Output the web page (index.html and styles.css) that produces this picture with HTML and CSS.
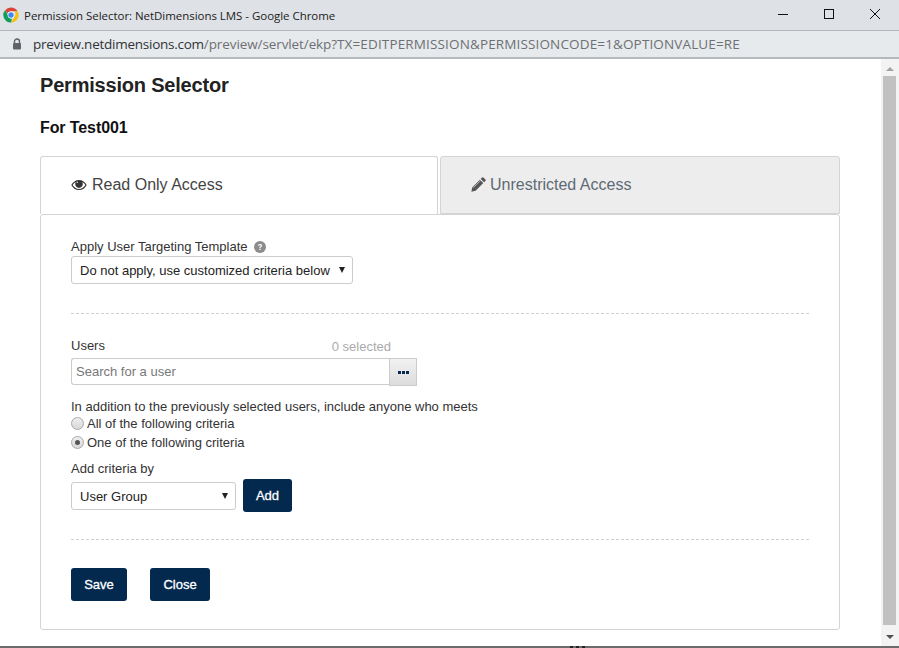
FILE: index.html
```html
<!DOCTYPE html>
<html lang="en">
<head>
<meta charset="utf-8">
<title>Permission Selector: NetDimensions LMS</title>
<link rel="stylesheet" href="styles.css">
</head>
<body>
<div class="window">
  <header class="titlebar">
    <svg class="chrome-logo" width="16" height="16" viewBox="0 0 16 16">
      <path d="M8 0.500a7.500 7.500 0 0 1 6.500 3.750H8a3.750 3.750 0 0 0-3.400 2.200L2.100 3.200A7.500 7.500 0 0 1 8 0.500z" fill="#db4437"/>
      <path d="M14.500 4.250A7.500 7.500 0 0 1 8 15.500l3.250-5.600a3.750 3.750 0 0 0 0-5.650z" fill="#f4c20d"/>
      <path d="M8 15.500A7.500 7.500 0 0 1 2.100 3.200l3.250 5.600A3.750 3.750 0 0 0 9 11.600z" fill="#0f9d58"/>
      <circle cx="8" cy="8" r="3.400" fill="#fff"/>
      <circle cx="8" cy="8" r="2.700" fill="#4285f4"/>
    </svg>
    <span class="title-text">Permission Selector: NetDimensions LMS - Google Chrome</span>
    <div class="win-controls">
      <svg class="win-btn" width="12" height="12" viewBox="0 0 12 12"><path d="M1 6.500h10" stroke="#111" fill="none"/></svg>
      <svg class="win-btn" width="12" height="12" viewBox="0 0 12 12"><rect x="1.500" y="1.500" width="9" height="9" stroke="#111" fill="none"/></svg>
      <svg class="win-btn" width="12" height="12" viewBox="0 0 12 12"><path d="M1 1l10 10M11 1L1 11" stroke="#111" fill="none"/></svg>
    </div>
  </header>
  <div class="urlbar">
    <svg class="lock" width="10" height="12" viewBox="0 0 10 12"><path d="M2.500 5V3.500a2.500 2.500 0 0 1 5 0V5" fill="none" stroke="#5f6368" stroke-width="1.400"/><rect x="1" y="5" width="8" height="6.500" rx="1" fill="#5f6368"/></svg>
    <span class="url"><span class="host">preview.netdimensions.com</span><span class="path">/preview/servlet/ekp?</span><span class="query">TX=EDITPERMISSION&amp;PERMISSIONCODE=1&amp;OPTIONVALUE=RE</span></span>
  </div>
  <div class="viewport">
    <main class="page">
      <h1 class="page-title">Permission Selector</h1>
      <h2 class="page-sub">For Test001</h2>
      <div class="tabs">
        <div class="tab tab-active">
          <svg class="tab-icon" width="16" height="12" viewBox="0 0 16 12"><path fill-rule="evenodd" fill="#333" d="M8 1C4.600 1 1.800 3 .3 6c1.500 3 4.300 5 7.700 5s6.200-2 7.700-5C14.200 3 11.400 1 8 1zM8 9.900C5.300 9.900 3 8.400 1.600 6 2.400 4.700 3.500 3.700 4.800 3.100 4.400 3.600 4.200 4.300 4.200 5.100 4.200 7.200 5.900 8.900 8 8.900s3.800-1.700 3.800-3.800c0-.8-.2-1.500-.6-2 1.300.6 2.400 1.600 3.200 2.900C13 8.400 10.700 9.900 8 9.900zM6.900 3.200c0 .4-.3.700-.7.700s-.7-.3-.7-.7.3-.7.7-.7.7.3.7.7z"/></svg>
          <span>Read Only Access</span>
        </div>
        <div class="tab tab-inactive">
          <svg class="tab-icon" width="15" height="15" viewBox="0 0 15 15"><path fill="#555" d="M11 .6a1 1 0 0 1 1.400 0l2 2a1 1 0 0 1 0 1.400l-1.300 1.300-3.400-3.400zM8.900 2.700l3.400 3.400-7.700 7.700-4.200 1 .8-4.400z"/><path d="M2.400 10.700l7.300-7.300" stroke="#ededed" stroke-width=".6" fill="none"/></svg>
          <span>Unrestricted Access</span>
        </div>
      </div>
      <section class="panel">
        <div class="field-label">Apply User Targeting Template
          <svg class="help" width="12" height="12" viewBox="0 0 12 12"><circle cx="6" cy="6" r="6" fill="#8c8c8c"/><path d="M3.900 4.700c0-1.100.9-1.800 2.100-1.800s2.200.7 2.200 1.700c0 1.400-1.600 1.300-1.600 2.400H5.300c0-1.600 1.500-1.500 1.500-2.300 0-.4-.3-.6-.8-.6s-.8.300-.8.700z" fill="#fff"/><rect x="5.300" y="7.700" width="1.300" height="1.300" fill="#fff"/></svg>
        </div>
        <div class="select-wrap select-template">
          <select class="select"><option>Do not apply, use customized criteria below</option></select>
          <svg class="caret" width="6" height="6" viewBox="0 0 6 6"><path d="M0 0h6L3 6z" fill="#222"/></svg>
        </div>
        <hr class="divider divider-first">
        <div class="users-head">
          <span class="users-label">Users</span>
          <span class="count">0 selected</span>
        </div>
        <div class="search-row">
          <input class="search" type="text" placeholder="Search for a user">
          <button class="more" type="button" aria-label="Browse users">
            <svg width="11" height="3" viewBox="0 0 11 3"><rect x="0" y="0" width="3" height="3" fill="#03294f"/><rect x="4" y="0" width="3" height="3" fill="#03294f"/><rect x="8" y="0" width="3" height="3" fill="#03294f"/></svg>
          </button>
        </div>
        <div class="addition">In addition to the previously selected users, include anyone who meets</div>
        <label class="radio-row"><input class="radio" type="radio" name="crit">All of the following criteria</label>
        <label class="radio-row"><input class="radio" type="radio" name="crit" checked>One of the following criteria</label>
        <div class="add-label">Add criteria by</div>
        <div class="add-row">
          <div class="select-wrap select-criteria">
            <select class="select"><option>User Group</option></select>
            <svg class="caret" width="6" height="6" viewBox="0 0 6 6"><path d="M0 0h6L3 6z" fill="#222"/></svg>
          </div>
          <button class="btn btn-add" type="button">Add</button>
        </div>
        <hr class="divider divider-second">
        <div class="actions">
          <button class="btn btn-save" type="button">Save</button>
          <button class="btn btn-close" type="button">Close</button>
        </div>
      </section>
    </main>
    <div class="scrollbar">
      <svg class="scroll-arrow" width="8" height="4" viewBox="0 0 8 4"><path d="M4 0l4 4H0z" fill="#a3a3a3"/></svg>
      <div class="thumb"></div>
      <svg class="scroll-arrow" width="8" height="4" viewBox="0 0 8 4"><path d="M0 0h8L4 4z" fill="#505050"/></svg>
    </div>
  </div>
  <div class="bottom-edge"><div class="edge-mark"></div></div>
</div>
</body>
</html>
```
FILE: styles.css
```css
* { box-sizing: border-box; }
html, body { margin: 0; padding: 0; height: 100%; overflow: hidden; background: #fff; }
body { font-family: "Liberation Sans", Arial, sans-serif; color: #333; font-size: 13px; }
.window { width: 899px; height: 648px; display: flex; flex-direction: column; }

.titlebar { height: 31px; flex: none; background: #dee1e6; border-bottom: 1px solid #b4b6ba; display: flex; align-items: center; padding-left: 3px; }
.chrome-logo { flex: none; }
.title-text { margin-left: 5px; font-family: "Open Sans", sans-serif; font-size: 11.500px; color: #222; letter-spacing: -0.04px; }
.win-controls { margin-left: auto; display: flex; gap: 34px; padding: 0 18px 2px 0; }
.win-btn { display: block; }

.urlbar { height: 28px; flex: none; background: #e7eaec; border-bottom: 2px solid #b6b8ba; display: flex; align-items: center; padding-left: 12px; }
.lock { flex: none; }
.url { margin-left: 11px; font-family: "Open Sans", sans-serif; font-size: 13.500px; color: #6d7074; letter-spacing: -0.25px; white-space: nowrap; }
.host { color: #303338; }
.path { letter-spacing: -0.1px; }
.query { letter-spacing: 0.14px; }

.viewport { flex: 1; min-height: 0; display: flex; }
.page { flex: 1; min-width: 0; padding: 15px 41px 0 40px; }
.page-title { margin: 0; font-size: 20px; line-height: 23px; font-weight: 700; color: #222; letter-spacing: -0.2px; }
.page-sub { margin: 22px 0 0; font-size: 16px; line-height: 18px; font-weight: 700; color: #111; letter-spacing: -0.1px; }

.tabs { margin-top: 19px; display: flex; gap: 2px; height: 58px; }
.tab { display: flex; align-items: center; gap: 5px; padding: 0 0 2px 30px; font-size: 16px; border: 1px solid #d4d4d4; border-radius: 3px 3px 0 0; }
.tab-active { width: 398px; background: #fff; color: #444; border-bottom: 0; }
.tab-inactive { width: 400px; padding-bottom: 1px; gap: 4px; background: #ededed; color: #5e6a74; }
.tab-icon { flex: none; }

.panel { height: 416px; border: 1px solid #d4d4d4; border-radius: 3px; padding: 25px 30px 0; background: #fff; }
.field-label { line-height: 14px; display: flex; align-items: center; gap: 6px; }
.help { flex: none; }

.select-wrap { position: relative; }
.select-template { margin-top: 2px; width: 282px; }
.select-criteria { width: 165px; margin-top: 3px; }
.select { appearance: none; -webkit-appearance: none; display: block; width: 100%; height: 28px; padding: 0 8px; border: 1px solid #ccc; border-radius: 3px; background: #fff; font-family: "Liberation Sans", Arial, sans-serif; font-size: 13px; color: #222; }
.caret { position: absolute; right: 8px; top: 11px; }

.divider { border: 0; border-top: 1px dashed #d0d0d0; margin: 0; }
.divider-first { margin-top: 29px; }
.divider-second { margin-top: 27px; }

.users-head { margin-top: 24px; width: 320px; display: flex; justify-content: space-between; align-items: flex-end; height: 15px; }
.users-label { line-height: 14px; }
.count { line-height: 14px; color: #aaa; margin-bottom: -1px; }

.search-row { margin-top: 5px; display: flex; width: 346px; height: 27px; }
.search { flex: 1; min-width: 0; height: 27px; padding: 0 4px; border: 1px solid #ccc; border-right: 0; border-radius: 3px 0 0 3px; font-family: "Liberation Sans", Arial, sans-serif; font-size: 13px; color: #333; outline: none; }
.search::placeholder { color: #777; opacity: 1; }
.more { width: 28px; height: 28px; padding: 0; border: 1px solid #ccc; background: linear-gradient(#f2f2f2, #dcdcdc); display: flex; align-items: center; justify-content: center; }

.addition { margin-top: 15px; line-height: 14px; }
.radio-row { display: flex; align-items: center; height: 19px; }
.radio { appearance: none; -webkit-appearance: none; width: 13px; height: 13px; margin: 0 3px 0 0; border: 1px solid #a8a8a8; border-radius: 50%; background: linear-gradient(#eee, #d8d8d8); position: relative; flex: none; }
.radio:checked::after { content: ""; position: absolute; left: 3px; top: 3px; width: 5px; height: 5px; border-radius: 50%; background: #555; }

.add-label { margin-top: 10px; line-height: 14px; }
.add-row { display: flex; align-items: flex-start; gap: 7px; margin-top: 3px; }
.btn { background: #03294f; color: #fff; border: 0; border-radius: 3px; font-family: "Liberation Sans", Arial, sans-serif; font-size: 13px; font-weight: 400; -webkit-text-stroke: 0.3px #fff; height: 33px; padding: 0; }
.btn-add { width: 49px; }
.actions { margin-top: 28px; display: flex; gap: 23px; }
.btn-save { width: 56px; }
.btn-close { width: 60px; }

.scrollbar { width: 18px; flex: none; background: #f3f3f3; display: flex; flex-direction: column; align-items: center; padding: 8px 1px 7px 0; }
.thumb { width: 13px; flex: 1; margin: 5px 0 10px; background: #c1c1c1; }
.scroll-arrow { flex: none; display: block; }

.bottom-edge { height: 2px; flex: none; background: #6b6b6b; padding-left: 570px; }
.edge-mark { width: 16px; height: 2px; background: repeating-linear-gradient(90deg, #222 0 3px, #6b6b6b 3px 6px); }
```
